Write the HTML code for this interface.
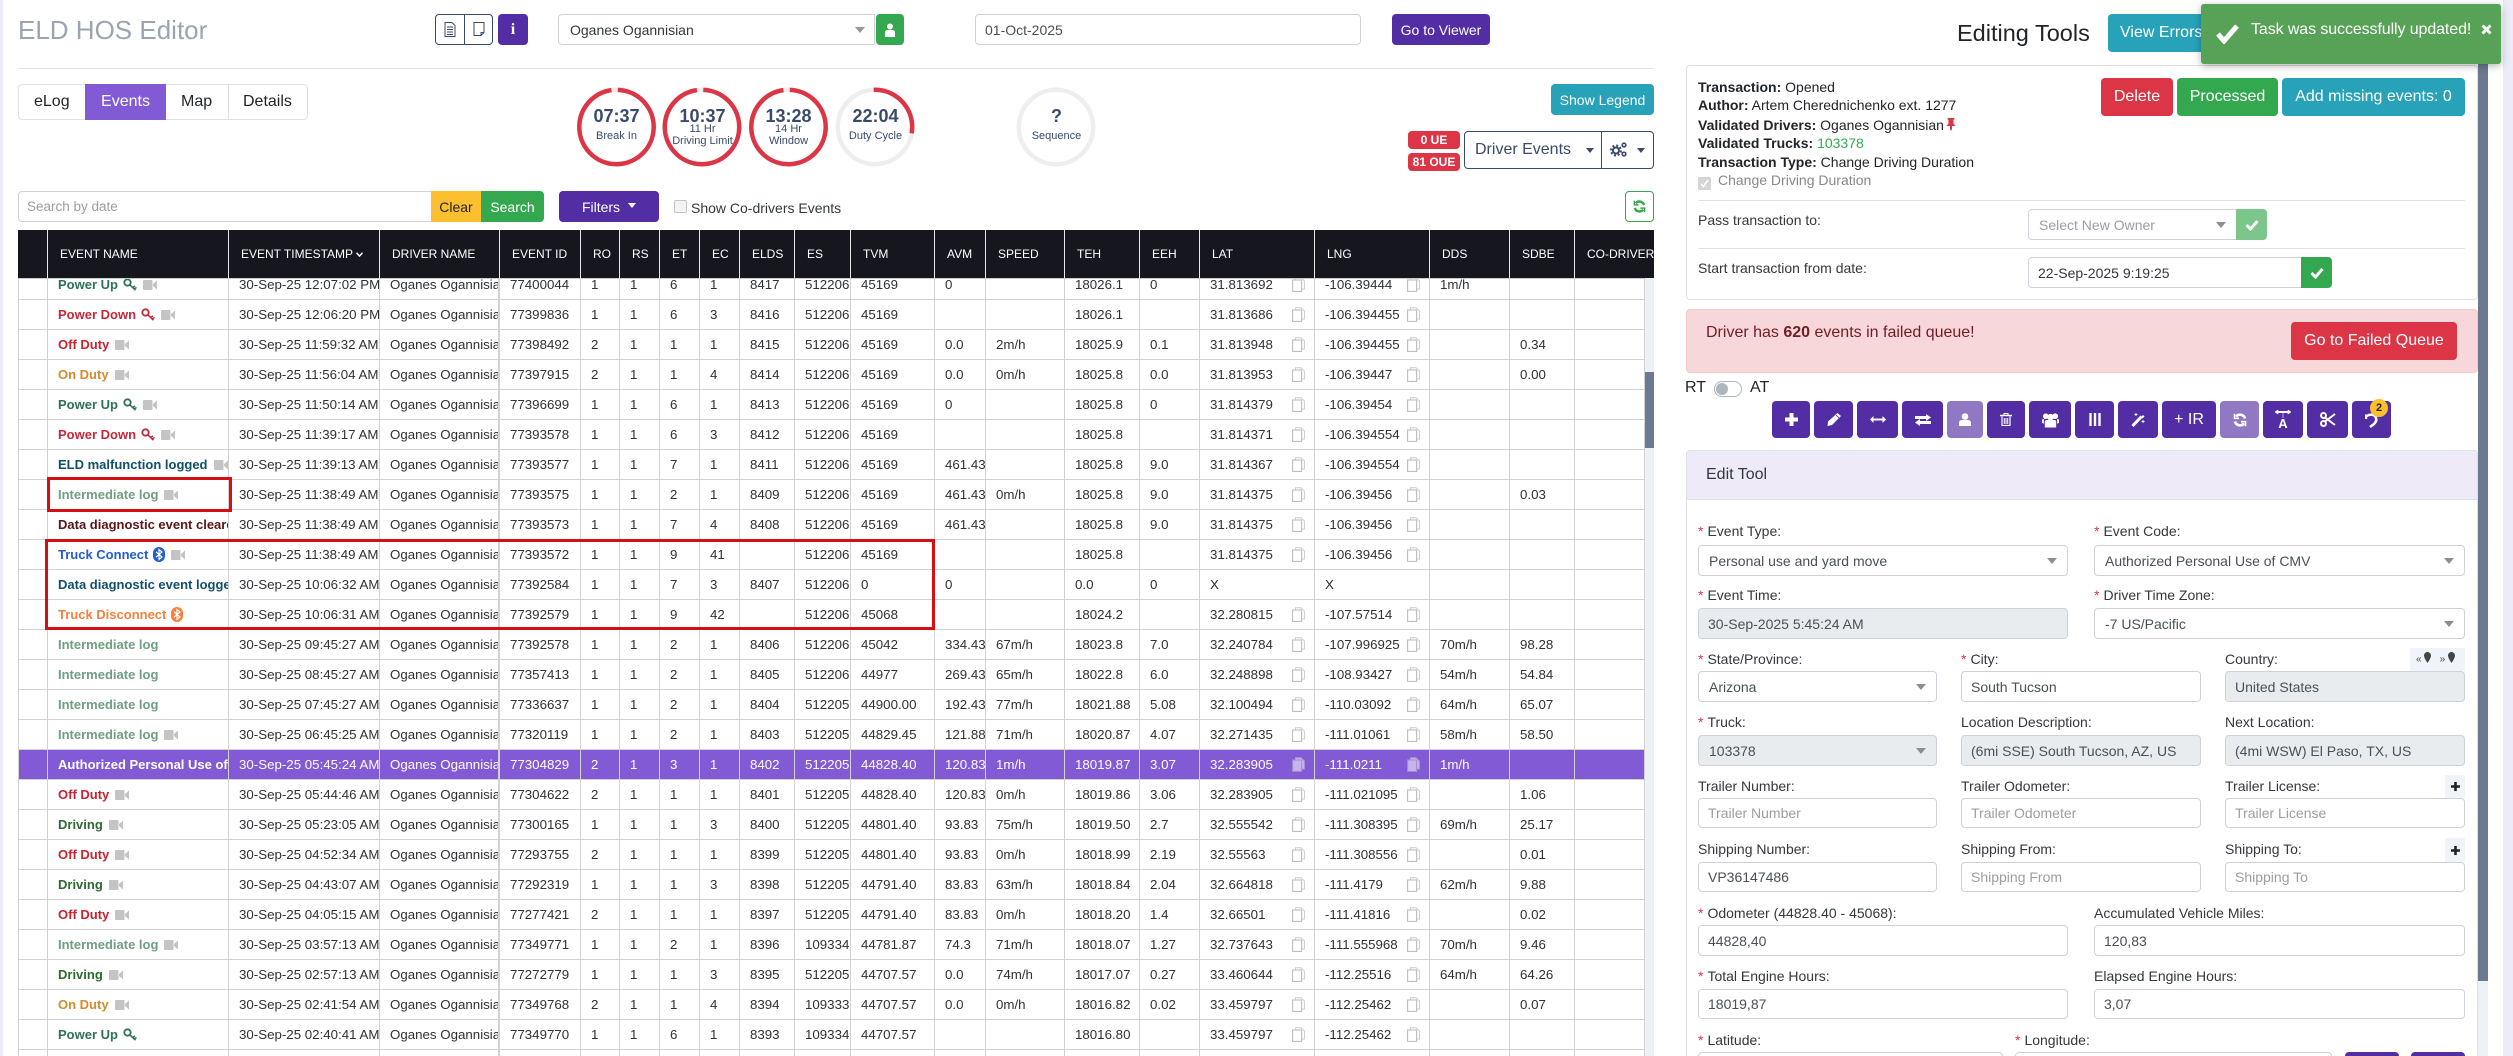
<!DOCTYPE html>
<html><head><meta charset="utf-8"><title>ELD HOS Editor</title>
<style>
*{box-sizing:border-box}
html,body{margin:0;padding:0;width:2513px;height:1056px;overflow:hidden;background:#fff;font-family:"Liberation Sans",sans-serif;color:#212529;font-size:14px}
#root{position:relative;width:2513px;height:1056px;overflow:hidden;background:#fff}
.a{position:absolute;white-space:nowrap}
.b{position:absolute;display:flex;align-items:center;justify-content:center;color:#fff;border-radius:4px;white-space:nowrap}
.p{background:#532da3}.g{background:#34a84f}.r{background:#dc3545}.i{background:#28a2b8}
.f{position:absolute;border:1px solid #ced2d8;border-radius:4px;background:#fff;display:flex;align-items:center;padding-left:9px;font-size:14px;color:#495057;white-space:nowrap}
.d{background:#e9ecef}
.s{padding-left:10px}
.s:after{content:"";position:absolute;right:10px;top:12px;border-left:5px solid transparent;border-right:5px solid transparent;border-top:6px solid #8a8f94}
.ph{color:#9a9ea3}
.l{position:absolute;font-size:14px;line-height:16px;color:#33383d;white-space:nowrap}
.l i{color:#dc3545;font-style:normal;margin-right:4px}
table{border-collapse:separate;border-spacing:0;table-layout:fixed;position:absolute}
#tb td{height:30px;padding:0 0 0 10px;border-right:1px solid #d2d2d2;border-bottom:1px solid #d2d2d2;font-size:13.3px;color:#2e3135;white-space:nowrap;overflow:hidden;position:relative;vertical-align:middle}
#tb td:first-child{border-left:1px solid #d2d2d2}
#tb td:nth-child(2){font-weight:bold;font-size:13px}
#tb td:nth-child(4){border-right:2px solid #d2d2d2}
#tb tr.sel td{background:#835ad6;color:#fff}
#th td{height:48px;background:#16161e;color:#fff;font-size:12px;padding:0 0 0 12px;border-right:1px solid #e8e8e8;white-space:nowrap;overflow:hidden;vertical-align:middle}
.c{display:inline-block;width:14px;height:10px;margin-left:6px;vertical-align:-1px}
.k{display:inline-block;width:14px;height:13px;margin-left:5px;vertical-align:-2px}
.bt{display:inline-block;width:12px;height:15px;margin-left:5px;vertical-align:-3px}
.cp{position:absolute;left:92px;top:7px;width:13px;height:15px}
#tb td.pu{color:#2f7058}#tb td.pd{color:#c4283a}#tb td.od{color:#c8232f}#tb td.on{color:#d68a2e}#tb td.em{color:#10506b}#tb td.il{color:#6f9f80}#tb td.dc{color:#5a1518}#tb td.tc{color:#1f5fcf}#tb td.td{color:#f5823c}#tb td.dr{color:#2d6b2f}#tb td.au{color:#fff}
.tbi{position:absolute;top:401px;height:37px;background:#532da3;border-radius:4px;display:flex;align-items:center;justify-content:center;color:#fff}
</style></head><body>
<div id="root">
<svg width="0" height="0" style="position:absolute"><defs>
<symbol id="cam" viewBox="0 0 14 10"><rect x="0" y="0" width="9.500" height="10" rx="1" fill="#c4c4c4"/><path d="M10 4 14 .5v9L10 6z" fill="#c4c4c4"/></symbol>
<symbol id="key" viewBox="0 0 14 13"><circle cx="4.500" cy="4.500" r="3.200" fill="none" stroke="currentColor" stroke-width="1.800"/><path d="M6.800 6.800 12.500 12.200M9.500 9.500 12 8M11 11 13.500 9.500" fill="none" stroke="currentColor" stroke-width="1.600"/></symbol>
<symbol id="bt" viewBox="0 0 12 15"><rect width="12" height="15" rx="6" fill="currentColor"/><path d="M3 4.800 9 10 6 12.500V2.500L9 5 3 10.200" fill="none" stroke="#fff" stroke-width="1.200"/></symbol>
<symbol id="cp" viewBox="0 0 13 15"><path d="M3.500 3V.7h5.500L12.400 4v8H9.500" fill="#fff" stroke="#ccc" stroke-width="1"/><rect x=".6" y="3" width="9" height="11.400" fill="#fff" stroke="#bdbdbd" stroke-width="1.100"/></symbol>
</defs></svg>

<div class="a" style="left:0;top:0;width:3px;height:1056px;background:#ecebf7"></div>
<div class="a" style="left:2503px;top:0;width:10px;height:1056px;background:#ecebf7"></div>

<div class="a" style="left:18px;top:14px;font-size:26px;line-height:32px;color:#9aa5b1">ELD HOS Editor</div>
<div class="a" style="left:435px;top:14px;width:58px;height:31px;border:1px solid #3a4a6b;border-radius:4px"></div>
<div class="a" style="left:464px;top:14px;width:1px;height:31px;background:#3a4a6b"></div>
<svg class="a" style="left:444px;top:22px" width="12" height="15" viewBox="0 0 12 15"><path d="M1 .5h7l3 3v11H1zM3 5h6M3 7.500h6M3 10h6M3 12.500h6" fill="none" stroke="#3a4a6b"/></svg>
<svg class="a" style="left:473px;top:22px" width="12" height="15" viewBox="0 0 12 15"><path d="M1 .5h10v10l-3 3H1zM8 13.500v-3h3" fill="none" stroke="#3a4a6b"/></svg>
<div class="b p" style="left:498px;top:14px;width:30px;height:31px;font-weight:bold;font-family:'Liberation Serif',serif;font-size:16px">i</div>
<div class="f" style="left:558px;top:14px;width:317px;height:31px;padding-left:11px;color:#33383d;border-radius:4px 0 0 4px">Oganes Ogannisian</div>
<div class="a" style="left:855px;top:27px;border-left:5px solid transparent;border-right:5px solid transparent;border-top:6px solid #999"></div>
<div class="b g" style="left:876px;top:14px;width:28px;height:31px"><svg width="12" height="14" viewBox="0 0 12 14"><circle cx="6" cy="3.500" r="3" fill="#fff"/><path d="M1 14V9.500Q1 7 4 7h4q3 0 3 2.500V14z" fill="#fff"/></svg></div>
<div class="f" style="left:975px;top:14px;width:386px;height:31px;color:#495057">01-Oct-2025</div>
<div class="b p" style="left:1392px;top:14px;width:98px;height:31px;font-size:14px">Go to Viewer</div>
<div class="a" style="left:18px;top:68px;width:1636px;height:1px;background:#dee2e6"></div>

<div class="a" style="left:18px;top:84px;width:290px;height:36px;border:1px solid #dee2e6;border-radius:4px"></div>
<div class="a" style="left:228px;top:84px;width:1px;height:36px;background:#dee2e6"></div>
<div class="a" style="left:34px;top:84px;line-height:36px;font-size:16px">eLog</div>
<div class="b" style="left:85px;top:84px;width:81px;height:36px;background:#835ad6;border-radius:0;font-size:16px">Events</div>
<div class="a" style="left:181px;top:84px;line-height:36px;font-size:16px">Map</div>
<div class="a" style="left:243px;top:84px;line-height:36px;font-size:16px">Details</div>

<svg class="a" style="left:570px;top:84px" width="530" height="86" viewBox="0 0 530 86" fill="none">
<g stroke-width="4.500">
<circle cx="46.500" cy="43" r="37.200" stroke="#eee"/><circle cx="46.500" cy="43" r="37.200" stroke="#dc3545" stroke-dasharray="227 233.700" transform="rotate(-88 46.500 43)"/>
<circle cx="132" cy="43" r="37.200" stroke="#eee"/><circle cx="132" cy="43" r="37.200" stroke="#dc3545" stroke-dasharray="227 233.700" transform="rotate(-88 132 43)"/>
<circle cx="218.500" cy="43" r="37.200" stroke="#eee"/><circle cx="218.500" cy="43" r="37.200" stroke="#dc3545" stroke-dasharray="227 233.700" transform="rotate(-88 218.500 43)"/>
<circle cx="305" cy="43" r="37.200" stroke="#eee"/><circle cx="305" cy="43" r="37.200" stroke="#dc3545" stroke-dasharray="66 233.700" transform="rotate(-92 305 43)"/>
<circle cx="486" cy="43" r="37.200" stroke="#eee"/>
</g></svg>
<div class="a" style="left:576px;top:105px;width:81px;text-align:center;font:bold 18px/22px 'Liberation Sans',sans-serif;color:#3a4a6b">07:37</div>
<div class="a" style="left:576px;top:129px;width:81px;text-align:center;font-size:11px;line-height:14px;color:#3a4a6b">Break In</div>
<div class="a" style="left:662px;top:105px;width:81px;text-align:center;font:bold 18px/22px 'Liberation Sans',sans-serif;color:#3a4a6b">10:37</div>
<div class="a" style="left:662px;top:124px;width:81px;text-align:center;font-size:11px;line-height:11.500px;color:#3a4a6b">11 Hr<br>Driving Limit</div>
<div class="a" style="left:748px;top:105px;width:81px;text-align:center;font:bold 18px/22px 'Liberation Sans',sans-serif;color:#3a4a6b">13:28</div>
<div class="a" style="left:748px;top:124px;width:81px;text-align:center;font-size:11px;line-height:11.500px;color:#3a4a6b">14 Hr<br>Window</div>
<div class="a" style="left:835px;top:105px;width:81px;text-align:center;font:bold 18px/22px 'Liberation Sans',sans-serif;color:#3a4a6b">22:04</div>
<div class="a" style="left:835px;top:129px;width:81px;text-align:center;font-size:11px;line-height:14px;color:#3a4a6b">Duty Cycle</div>
<div class="a" style="left:1016px;top:105px;width:81px;text-align:center;font:bold 18px/22px 'Liberation Sans',sans-serif;color:#3a4a6b">?</div>
<div class="a" style="left:1016px;top:129px;width:81px;text-align:center;font-size:11px;line-height:14px;color:#3a4a6b">Sequence</div>

<div class="b i" style="left:1551px;top:84px;width:103px;height:31px;font-size:14px">Show Legend</div>
<div class="b r" style="left:1408px;top:131px;width:52px;height:18px;font-size:12px;font-weight:bold">0 UE</div>
<div class="b r" style="left:1408px;top:153px;width:52px;height:18px;font-size:12px;font-weight:bold">81 OUE</div>
<div class="a" style="left:1464px;top:131px;width:190px;height:38px;border:1px solid #3a4a6b;border-radius:4px"></div>
<div class="a" style="left:1601px;top:131px;width:1px;height:38px;background:#3a4a6b"></div>
<div class="a" style="left:1475px;top:131px;line-height:38px;font-size:16px;color:#3a4a6b">Driver Events</div>
<div class="a" style="left:1586px;top:148px;border-left:4px solid transparent;border-right:4px solid transparent;border-top:5px solid #3a4a6b"></div>
<svg class="a" style="left:1610px;top:142px" width="18" height="15" viewBox="0 0 18 15" fill="none" stroke="#3a4a6b"><circle cx="6" cy="8.500" r="3" stroke-width="2"/><circle cx="6" cy="8.500" r="5" stroke-width="2" stroke-dasharray="2 1.930"/><circle cx="14" cy="3" r="1.800" stroke-width="1.600"/><circle cx="14" cy="12" r="1.800" stroke-width="1.600"/></svg>
<div class="a" style="left:1637px;top:148px;border-left:4px solid transparent;border-right:4px solid transparent;border-top:5px solid #3a4a6b"></div>

<div class="f ph" style="left:18px;top:191px;width:414px;height:31px;padding-left:8px;border-radius:4px 0 0 4px;font-size:13.500px">Search by date</div>
<div class="b" style="left:431px;top:191px;width:50px;height:31px;background:#fcc02e;color:#222;border-radius:0;font-size:14px">Clear</div>
<div class="b g" style="left:481px;top:191px;width:63px;height:31px;border-radius:0 4px 4px 0;font-size:14px">Search</div>
<div class="b p" style="left:559px;top:191px;width:100px;height:31px;font-size:14px">Filters<span style="display:inline-block;margin-left:8px;margin-top:-3px;border-left:4px solid transparent;border-right:4px solid transparent;border-top:5px solid #fff"></span></div>
<div class="a" style="left:674px;top:200px;width:13px;height:13px;border:1px solid #c4c4c4;border-radius:2px;background:#f3f3f3"></div>
<div class="a" style="left:691px;top:199px;font-size:14px;line-height:18px;color:#33383d">Show Co-drivers Events</div>
<div class="a" style="left:1625px;top:191px;width:29px;height:31px;border:1px solid #34a84f;border-radius:4px"></div>
<svg class="a" style="left:1633px;top:200px" width="13" height="13" viewBox="0 0 14 14" fill="none" stroke="#34a84f" stroke-width="2.600"><path d="M12 5.500A5.200 5.200 0 0 0 3 3.500M2 8.500A5.200 5.200 0 0 0 11 10.500"/><path d="M1.500.8v4.500h4.500M12.500 13.200V8.700H8" stroke-width="1.600"/></svg>

<table id="th" style="left:18px;top:230px;width:1636px">
<colgroup><col width="30"><col width="181"><col width="151"><col width="120"><col width="81"><col width="39"><col width="40"><col width="40"><col width="40"><col width="55"><col width="56"><col width="84"><col width="51"><col width="79"><col width="75"><col width="60"><col width="115"><col width="115"><col width="80"><col width="65"><col width="79"></colgroup>
<tr><td></td><td>EVENT NAME</td><td>EVENT TIMESTAMP <svg width="7" height="5" viewBox="0 0 7 5" style="vertical-align:1px"><path d="M.5.800 3.500 4 6.500.8" fill="none" stroke="#fff" stroke-width="1.500"/></svg></td><td>DRIVER NAME</td><td>EVENT ID</td><td>RO</td><td>RS</td><td>ET</td><td>EC</td><td>ELDS</td><td>ES</td><td>TVM</td><td>AVM</td><td>SPEED</td><td>TEH</td><td>EEH</td><td>LAT</td><td>LNG</td><td>DDS</td><td>SDBE</td><td style="border-right:0">CO-DRIVER</td></tr>
</table>
<div class="a" style="left:18px;top:278px;width:1627px;height:1px;background:#ccc;z-index:2"></div>

<div class="a" style="left:18px;top:278px;width:1627px;height:778px;overflow:hidden">
<table id="tb" style="left:0;top:-8px;width:1627px">
<colgroup><col width="30"><col width="181"><col width="151"><col width="120"><col width="81"><col width="39"><col width="40"><col width="40"><col width="40"><col width="55"><col width="56"><col width="84"><col width="51"><col width="79"><col width="75"><col width="60"><col width="115"><col width="115"><col width="80"><col width="65"><col width="70"></colgroup>
<tr><td></td><td class="pu">Power Up<svg class="k"><use href="#key"/></svg><svg class="c"><use href="#cam"/></svg></td><td>30-Sep-25 12:07:02 PM</td><td>Oganes Ogannisian</td><td>77400044</td><td>1</td><td>1</td><td>6</td><td>1</td><td>8417</td><td>512206</td><td>45169</td><td>0</td><td></td><td>18026.1</td><td>0</td><td>31.813692<svg class="cp"><use href="#cp"/></svg></td><td>-106.39444<svg class="cp"><use href="#cp"/></svg></td><td>1m/h</td><td></td><td></td></tr>
<tr><td></td><td class="pd">Power Down<svg class="k"><use href="#key"/></svg><svg class="c"><use href="#cam"/></svg></td><td>30-Sep-25 12:06:20 PM</td><td>Oganes Ogannisian</td><td>77399836</td><td>1</td><td>1</td><td>6</td><td>3</td><td>8416</td><td>512206</td><td>45169</td><td></td><td></td><td>18026.1</td><td></td><td>31.813686<svg class="cp"><use href="#cp"/></svg></td><td>-106.394455<svg class="cp"><use href="#cp"/></svg></td><td></td><td></td><td></td></tr>
<tr><td></td><td class="od">Off Duty<svg class="c"><use href="#cam"/></svg></td><td>30-Sep-25 11:59:32 AM</td><td>Oganes Ogannisian</td><td>77398492</td><td>2</td><td>1</td><td>1</td><td>1</td><td>8415</td><td>512206</td><td>45169</td><td>0.0</td><td>2m/h</td><td>18025.9</td><td>0.1</td><td>31.813948<svg class="cp"><use href="#cp"/></svg></td><td>-106.394455<svg class="cp"><use href="#cp"/></svg></td><td></td><td>0.34</td><td></td></tr>
<tr><td></td><td class="on">On Duty<svg class="c"><use href="#cam"/></svg></td><td>30-Sep-25 11:56:04 AM</td><td>Oganes Ogannisian</td><td>77397915</td><td>2</td><td>1</td><td>1</td><td>4</td><td>8414</td><td>512206</td><td>45169</td><td>0.0</td><td>0m/h</td><td>18025.8</td><td>0.0</td><td>31.813953<svg class="cp"><use href="#cp"/></svg></td><td>-106.39447<svg class="cp"><use href="#cp"/></svg></td><td></td><td>0.00</td><td></td></tr>
<tr><td></td><td class="pu">Power Up<svg class="k"><use href="#key"/></svg><svg class="c"><use href="#cam"/></svg></td><td>30-Sep-25 11:50:14 AM</td><td>Oganes Ogannisian</td><td>77396699</td><td>1</td><td>1</td><td>6</td><td>1</td><td>8413</td><td>512206</td><td>45169</td><td>0</td><td></td><td>18025.8</td><td>0</td><td>31.814379<svg class="cp"><use href="#cp"/></svg></td><td>-106.39454<svg class="cp"><use href="#cp"/></svg></td><td></td><td></td><td></td></tr>
<tr><td></td><td class="pd">Power Down<svg class="k"><use href="#key"/></svg><svg class="c"><use href="#cam"/></svg></td><td>30-Sep-25 11:39:17 AM</td><td>Oganes Ogannisian</td><td>77393578</td><td>1</td><td>1</td><td>6</td><td>3</td><td>8412</td><td>512206</td><td>45169</td><td></td><td></td><td>18025.8</td><td></td><td>31.814371<svg class="cp"><use href="#cp"/></svg></td><td>-106.394554<svg class="cp"><use href="#cp"/></svg></td><td></td><td></td><td></td></tr>
<tr><td></td><td class="em">ELD malfunction logged<svg class="c"><use href="#cam"/></svg></td><td>30-Sep-25 11:39:13 AM</td><td>Oganes Ogannisian</td><td>77393577</td><td>1</td><td>1</td><td>7</td><td>1</td><td>8411</td><td>512206</td><td>45169</td><td>461.43</td><td></td><td>18025.8</td><td>9.0</td><td>31.814367<svg class="cp"><use href="#cp"/></svg></td><td>-106.394554<svg class="cp"><use href="#cp"/></svg></td><td></td><td></td><td></td></tr>
<tr><td></td><td class="il">Intermediate log<svg class="c"><use href="#cam"/></svg></td><td>30-Sep-25 11:38:49 AM</td><td>Oganes Ogannisian</td><td>77393575</td><td>1</td><td>1</td><td>2</td><td>1</td><td>8409</td><td>512206</td><td>45169</td><td>461.43</td><td>0m/h</td><td>18025.8</td><td>9.0</td><td>31.814375<svg class="cp"><use href="#cp"/></svg></td><td>-106.39456<svg class="cp"><use href="#cp"/></svg></td><td></td><td>0.03</td><td></td></tr>
<tr><td></td><td class="dc">Data diagnostic event cleared</td><td>30-Sep-25 11:38:49 AM</td><td>Oganes Ogannisian</td><td>77393573</td><td>1</td><td>1</td><td>7</td><td>4</td><td>8408</td><td>512206</td><td>45169</td><td>461.43</td><td></td><td>18025.8</td><td>9.0</td><td>31.814375<svg class="cp"><use href="#cp"/></svg></td><td>-106.39456<svg class="cp"><use href="#cp"/></svg></td><td></td><td></td><td></td></tr>
<tr><td></td><td class="tc">Truck Connect<svg class="bt"><use href="#bt"/></svg><svg class="c"><use href="#cam"/></svg></td><td>30-Sep-25 11:38:49 AM</td><td>Oganes Ogannisian</td><td>77393572</td><td>1</td><td>1</td><td>9</td><td>41</td><td></td><td>512206</td><td>45169</td><td></td><td></td><td>18025.8</td><td></td><td>31.814375<svg class="cp"><use href="#cp"/></svg></td><td>-106.39456<svg class="cp"><use href="#cp"/></svg></td><td></td><td></td><td></td></tr>
<tr><td></td><td class="em">Data diagnostic event logged</td><td>30-Sep-25 10:06:32 AM</td><td>Oganes Ogannisian</td><td>77392584</td><td>1</td><td>1</td><td>7</td><td>3</td><td>8407</td><td>512206</td><td>0</td><td>0</td><td></td><td>0.0</td><td>0</td><td>X</td><td>X</td><td></td><td></td><td></td></tr>
<tr><td></td><td class="td">Truck Disconnect<svg class="bt"><use href="#bt"/></svg></td><td>30-Sep-25 10:06:31 AM</td><td>Oganes Ogannisian</td><td>77392579</td><td>1</td><td>1</td><td>9</td><td>42</td><td></td><td>512206</td><td>45068</td><td></td><td></td><td>18024.2</td><td></td><td>32.280815<svg class="cp"><use href="#cp"/></svg></td><td>-107.57514<svg class="cp"><use href="#cp"/></svg></td><td></td><td></td><td></td></tr>
<tr><td></td><td class="il">Intermediate log</td><td>30-Sep-25 09:45:27 AM</td><td>Oganes Ogannisian</td><td>77392578</td><td>1</td><td>1</td><td>2</td><td>1</td><td>8406</td><td>512206</td><td>45042</td><td>334.43</td><td>67m/h</td><td>18023.8</td><td>7.0</td><td>32.240784<svg class="cp"><use href="#cp"/></svg></td><td>-107.996925<svg class="cp"><use href="#cp"/></svg></td><td>70m/h</td><td>98.28</td><td></td></tr>
<tr><td></td><td class="il">Intermediate log</td><td>30-Sep-25 08:45:27 AM</td><td>Oganes Ogannisian</td><td>77357413</td><td>1</td><td>1</td><td>2</td><td>1</td><td>8405</td><td>512206</td><td>44977</td><td>269.43</td><td>65m/h</td><td>18022.8</td><td>6.0</td><td>32.248898<svg class="cp"><use href="#cp"/></svg></td><td>-108.93427<svg class="cp"><use href="#cp"/></svg></td><td>54m/h</td><td>54.84</td><td></td></tr>
<tr><td></td><td class="il">Intermediate log</td><td>30-Sep-25 07:45:27 AM</td><td>Oganes Ogannisian</td><td>77336637</td><td>1</td><td>1</td><td>2</td><td>1</td><td>8404</td><td>512205</td><td>44900.00</td><td>192.43</td><td>77m/h</td><td>18021.88</td><td>5.08</td><td>32.100494<svg class="cp"><use href="#cp"/></svg></td><td>-110.03092<svg class="cp"><use href="#cp"/></svg></td><td>64m/h</td><td>65.07</td><td></td></tr>
<tr><td></td><td class="il">Intermediate log<svg class="c"><use href="#cam"/></svg></td><td>30-Sep-25 06:45:25 AM</td><td>Oganes Ogannisian</td><td>77320119</td><td>1</td><td>1</td><td>2</td><td>1</td><td>8403</td><td>512205</td><td>44829.45</td><td>121.88</td><td>71m/h</td><td>18020.87</td><td>4.07</td><td>32.271435<svg class="cp"><use href="#cp"/></svg></td><td>-111.01061<svg class="cp"><use href="#cp"/></svg></td><td>58m/h</td><td>58.50</td><td></td></tr>
<tr class="sel"><td></td><td class="au">Authorized Personal Use of CMV</td><td>30-Sep-25 05:45:24 AM</td><td>Oganes Ogannisian</td><td>77304829</td><td>2</td><td>1</td><td>3</td><td>1</td><td>8402</td><td>512205</td><td>44828.40</td><td>120.83</td><td>1m/h</td><td>18019.87</td><td>3.07</td><td>32.283905<svg class="cp" style="opacity:.55"><use href="#cp"/></svg></td><td>-111.0211<svg class="cp" style="opacity:.55"><use href="#cp"/></svg></td><td>1m/h</td><td></td><td></td></tr>
<tr><td></td><td class="od">Off Duty<svg class="c"><use href="#cam"/></svg></td><td>30-Sep-25 05:44:46 AM</td><td>Oganes Ogannisian</td><td>77304622</td><td>2</td><td>1</td><td>1</td><td>1</td><td>8401</td><td>512205</td><td>44828.40</td><td>120.83</td><td>0m/h</td><td>18019.86</td><td>3.06</td><td>32.283905<svg class="cp"><use href="#cp"/></svg></td><td>-111.021095<svg class="cp"><use href="#cp"/></svg></td><td></td><td>1.06</td><td></td></tr>
<tr><td></td><td class="dr">Driving<svg class="c"><use href="#cam"/></svg></td><td>30-Sep-25 05:23:05 AM</td><td>Oganes Ogannisian</td><td>77300165</td><td>1</td><td>1</td><td>1</td><td>3</td><td>8400</td><td>512205</td><td>44801.40</td><td>93.83</td><td>75m/h</td><td>18019.50</td><td>2.7</td><td>32.555542<svg class="cp"><use href="#cp"/></svg></td><td>-111.308395<svg class="cp"><use href="#cp"/></svg></td><td>69m/h</td><td>25.17</td><td></td></tr>
<tr><td></td><td class="od">Off Duty<svg class="c"><use href="#cam"/></svg></td><td>30-Sep-25 04:52:34 AM</td><td>Oganes Ogannisian</td><td>77293755</td><td>2</td><td>1</td><td>1</td><td>1</td><td>8399</td><td>512205</td><td>44801.40</td><td>93.83</td><td>0m/h</td><td>18018.99</td><td>2.19</td><td>32.55563<svg class="cp"><use href="#cp"/></svg></td><td>-111.308556<svg class="cp"><use href="#cp"/></svg></td><td></td><td>0.01</td><td></td></tr>
<tr><td></td><td class="dr">Driving<svg class="c"><use href="#cam"/></svg></td><td>30-Sep-25 04:43:07 AM</td><td>Oganes Ogannisian</td><td>77292319</td><td>1</td><td>1</td><td>1</td><td>3</td><td>8398</td><td>512205</td><td>44791.40</td><td>83.83</td><td>63m/h</td><td>18018.84</td><td>2.04</td><td>32.664818<svg class="cp"><use href="#cp"/></svg></td><td>-111.4179<svg class="cp"><use href="#cp"/></svg></td><td>62m/h</td><td>9.88</td><td></td></tr>
<tr><td></td><td class="od">Off Duty<svg class="c"><use href="#cam"/></svg></td><td>30-Sep-25 04:05:15 AM</td><td>Oganes Ogannisian</td><td>77277421</td><td>2</td><td>1</td><td>1</td><td>1</td><td>8397</td><td>512205</td><td>44791.40</td><td>83.83</td><td>0m/h</td><td>18018.20</td><td>1.4</td><td>32.66501<svg class="cp"><use href="#cp"/></svg></td><td>-111.41816<svg class="cp"><use href="#cp"/></svg></td><td></td><td>0.02</td><td></td></tr>
<tr><td></td><td class="il">Intermediate log<svg class="c"><use href="#cam"/></svg></td><td>30-Sep-25 03:57:13 AM</td><td>Oganes Ogannisian</td><td>77349771</td><td>1</td><td>1</td><td>2</td><td>1</td><td>8396</td><td>109334</td><td>44781.87</td><td>74.3</td><td>71m/h</td><td>18018.07</td><td>1.27</td><td>32.737643<svg class="cp"><use href="#cp"/></svg></td><td>-111.555968<svg class="cp"><use href="#cp"/></svg></td><td>70m/h</td><td>9.46</td><td></td></tr>
<tr><td></td><td class="dr">Driving<svg class="c"><use href="#cam"/></svg></td><td>30-Sep-25 02:57:13 AM</td><td>Oganes Ogannisian</td><td>77272779</td><td>1</td><td>1</td><td>1</td><td>3</td><td>8395</td><td>512205</td><td>44707.57</td><td>0.0</td><td>74m/h</td><td>18017.07</td><td>0.27</td><td>33.460644<svg class="cp"><use href="#cp"/></svg></td><td>-112.25516<svg class="cp"><use href="#cp"/></svg></td><td>64m/h</td><td>64.26</td><td></td></tr>
<tr><td></td><td class="on">On Duty<svg class="c"><use href="#cam"/></svg></td><td>30-Sep-25 02:41:54 AM</td><td>Oganes Ogannisian</td><td>77349768</td><td>2</td><td>1</td><td>1</td><td>4</td><td>8394</td><td>109333</td><td>44707.57</td><td>0.0</td><td>0m/h</td><td>18016.82</td><td>0.02</td><td>33.459797<svg class="cp"><use href="#cp"/></svg></td><td>-112.25462<svg class="cp"><use href="#cp"/></svg></td><td></td><td>0.07</td><td></td></tr>
<tr><td></td><td class="pu">Power Up<svg class="k"><use href="#key"/></svg></td><td>30-Sep-25 02:40:41 AM</td><td>Oganes Ogannisian</td><td>77349770</td><td>1</td><td>1</td><td>6</td><td>1</td><td>8393</td><td>109334</td><td>44707.57</td><td></td><td></td><td>18016.80</td><td></td><td>33.459797<svg class="cp"><use href="#cp"/></svg></td><td>-112.25462<svg class="cp"><use href="#cp"/></svg></td><td></td><td></td><td></td></tr>
<tr><td></td><td></td><td></td><td></td><td></td><td></td><td></td><td></td><td></td><td></td><td></td><td></td><td></td><td></td><td></td><td></td><td></td><td></td><td></td><td></td><td></td></tr>
</table>
</div>

<div class="a" style="left:1645px;top:278px;width:9px;height:778px;background:#edf0f4"></div>
<div class="a" style="left:1645px;top:372px;width:9px;height:76px;background:#6c7a91"></div>
<div class="a" style="left:47px;top:477px;width:185px;height:35px;border:3px solid #d40f14;z-index:3"></div>
<div class="a" style="left:45px;top:539px;width:890px;height:91px;border:3px solid #d40f14;z-index:3"></div>

<!-- right -->
<div class="a" style="left:1957px;top:18px;font-size:23.500px;line-height:30px;color:#212529">Editing Tools</div>
<div class="b i" style="left:2108px;top:14px;width:110px;height:38px;font-size:16px;justify-content:flex-start;padding-left:12px">View Errors</div>
<div class="a" style="left:2478px;top:40px;width:10px;height:941px;background:#6c7a91"></div>
<div class="a" style="left:2478px;top:981px;width:10px;height:75px;background:#edf0f4"></div>

<div class="a" style="left:1686px;top:65px;width:792px;height:235px;border:1px solid #dee2e6;border-radius:4px"></div>
<div class="a" style="left:1698px;top:78px;font-size:14px;line-height:18px"><b>Transaction:</b> Opened</div>
<div class="a" style="left:1698px;top:96px;font-size:14px;line-height:18px"><b>Author:</b> Artem Cherednichenko ext. 1277</div>
<div class="a" style="left:1698px;top:116px;font-size:14px;line-height:18px"><b>Validated Drivers:</b> Oganes Ogannisian<svg width="10" height="13" viewBox="0 0 10 13" style="vertical-align:-1px;margin-left:2px"><path d="M1.500 0h7v1L7.500 2v3.500L9.500 8H6v3l-1 2-1-2V8H.5l2-2.500V2l-1-1z" fill="#dc3545"/></svg></div>
<div class="a" style="left:1698px;top:134px;font-size:14px;line-height:18px"><b>Validated Trucks:</b> <span style="color:#34a84f">103378</span></div>
<div class="a" style="left:1698px;top:153px;font-size:14px;line-height:18px"><b>Transaction Type:</b> Change Driving Duration</div>
<div class="a" style="left:1698px;top:177px;width:13px;height:13px;background:#d5d5d5;border-radius:2px"></div>
<svg class="a" style="left:1699px;top:178px" width="11" height="11" viewBox="0 0 11 11"><path d="M2 6 4.500 8.500 9 2" fill="none" stroke="#fff" stroke-width="1.800"/></svg>
<div class="a" style="left:1718px;top:171px;font-size:14px;line-height:18px;color:#85898e">Change Driving Duration</div>
<div class="b r" style="left:2101px;top:78px;width:72px;height:38px;font-size:16px">Delete</div>
<div class="b g" style="left:2177px;top:78px;width:101px;height:38px;font-size:16px">Processed</div>
<div class="b i" style="left:2282px;top:78px;width:183px;height:38px;font-size:16px">Add missing events: 0</div>
<div class="a" style="left:1698px;top:200px;width:767px;height:1px;background:#dee2e6"></div>
<div class="l" style="left:1698px;top:212px">Pass transaction to:</div>
<div class="f ph s" style="left:2028px;top:209px;width:209px;height:31px;border-radius:4px 0 0 4px">Select New Owner</div>
<div class="b" style="left:2236px;top:209px;width:31px;height:31px;background:#7cc68b;border-radius:0 4px 4px 0"><svg width="14" height="12" viewBox="0 0 14 12"><path d="M1.500 6 5.500 10 12.500 2" fill="none" stroke="#fff" stroke-width="3"/></svg></div>
<div class="a" style="left:1698px;top:248px;width:767px;height:1px;background:#dee2e6"></div>
<div class="l" style="left:1698px;top:260px">Start transaction from date:</div>
<div class="f" style="left:2028px;top:257px;width:274px;height:31px;border-radius:4px 0 0 4px;color:#33383d">22-Sep-2025 9:19:25</div>
<div class="b g" style="left:2301px;top:257px;width:31px;height:31px;border-radius:0 4px 4px 0"><svg width="14" height="12" viewBox="0 0 14 12"><path d="M1.500 6 5.500 10 12.500 2" fill="none" stroke="#fff" stroke-width="3"/></svg></div>

<div class="a" style="left:1686px;top:309px;width:792px;height:64px;background:#f8d7da;border:1px solid #f5c6cb;border-radius:4px"></div>
<div class="a" style="left:1706px;top:323px;font-size:16px;line-height:20px;color:#721c24">Driver has <b>620</b> events in failed queue!</div>
<div class="b r" style="left:2291px;top:322px;width:166px;height:38px;font-size:16px">Go to Failed Queue</div>
<div class="a" style="left:1685px;top:378px;font-size:16px;line-height:20px;color:#212529">RT</div>
<div class="a" style="left:1714px;top:381px;width:28px;height:16px;border:1px solid #adb5bd;border-radius:8px;background:#fff"></div>
<div class="a" style="left:1716px;top:383px;width:12px;height:12px;border-radius:6px;background:#adb5bd"></div>
<div class="a" style="left:1750px;top:378px;font-size:16px;line-height:20px;color:#212529">AT</div>

<div class="tbi" style="left:1772px;width:38px"><svg width="13" height="13" viewBox="0 0 13 13"><path d="M6.500 0v13M0 6.500h13" stroke="#fff" stroke-width="4"/></svg></div>
<div class="tbi" style="left:1814px;width:39px"><svg width="14" height="13" viewBox="0 0 14 13"><path d="M10.500 0 14 3 5 12 .5 13l.5-4.500z" fill="#fff"/><path d="M9 2l3 2.800" stroke="#532da3" stroke-width=".8"/></svg></div>
<div class="tbi" style="left:1857px;width:41px"><svg width="16" height="7" viewBox="0 0 16 7"><path d="M0 3.500 3.500 0v2.500h9V0L16 3.500 12.500 7V4.500h-9V7z" fill="#fff"/></svg></div>
<div class="tbi" style="left:1902px;width:41px"><svg width="16" height="12" viewBox="0 0 16 12"><path d="M0 2h11V0l5 3.500L11 7V5H0zM16 7H5V5L0 8.500 5 12v-2h11z" fill="#fff"/></svg></div>
<div class="tbi" style="left:1947px;width:36px;background:#9079c2"><svg width="12" height="13" viewBox="0 0 12 13"><circle cx="6" cy="3.500" r="3.300" fill="#fff"/><path d="M0 13v-3q0-3 3-3h6q3 0 3 3v3z" fill="#fff"/></svg></div>
<div class="tbi" style="left:1987px;width:38px"><svg width="12" height="13" viewBox="0 0 12 13" fill="none" stroke="#fff"><path d="M0 2.500h12" stroke-width="1.500"/><path d="M4 2V.5h4V2" stroke-width="1"/><path d="M2 3.500V12.500h8V3.500" stroke-width="1.200"/><path d="M4.300 5v6M6 5v6M7.700 5v6" stroke-width="1"/></svg></div>
<div class="tbi" style="left:2029px;width:42px"><svg width="17" height="16" viewBox="0 0 18 16" fill="#fff"><circle cx="4" cy="4" r="3"/><circle cx="14" cy="4" r="3"/><circle cx="9" cy="5" r="3.500"/><path d="M3 16V10q0-2 2-2h8q2 0 2 2v6zM0 11V8q0-1 2-1v5zM18 11V8q0-1-2-1v5z"/></svg></div>
<div class="tbi" style="left:2075px;width:39px"><svg width="12" height="13" viewBox="0 0 12 13"><path d="M1.500 0v13M6 0v13M10.500 0v13" stroke="#fff" stroke-width="2.400"/></svg></div>
<div class="tbi" style="left:2118px;width:40px"><svg width="14" height="14" viewBox="0 0 14 14"><path d="M10.500 3.500 1.500 13" stroke="#fff" stroke-width="3"/><path d="M11 3l1.500 1.500" stroke="#fff" stroke-width="3"/><path d="M5 0v3M3.500 1.500h3M12 7v3M10.500 8.500h3" stroke="#fff" stroke-width="1"/></svg></div>
<div class="tbi" style="left:2162px;width:54px;font-size:16px">+ IR</div>
<div class="tbi" style="left:2220px;width:39px;background:#9079c2"><svg width="14" height="14" viewBox="0 0 14 14" fill="none" stroke="#fff" stroke-width="2.600"><path d="M12 5.500A5.200 5.200 0 0 0 3 3.500M2 8.500A5.200 5.200 0 0 0 11 10.500"/><path d="M1.500.8v4.500h4.500M12.500 13.200V8.700H8" stroke-width="1.600"/></svg></div>
<div class="tbi" style="left:2263px;width:40px;flex-direction:column"><svg width="16" height="8" viewBox="0 0 16 8"><path d="M0 2 3 0v1.300h10V0l3 2-3 2V2.700H3V4zM8 2v6" stroke="#fff" stroke-width=".6" fill="#fff"/></svg><span style="font-size:13px;line-height:12px;font-weight:bold">A</span></div>
<div class="tbi" style="left:2307px;width:41px"><svg width="16" height="15" viewBox="0 0 16 15" fill="none" stroke="#fff" stroke-width="2"><circle cx="3.500" cy="3.500" r="2.500"/><circle cx="3.500" cy="11.500" r="2.500"/><path d="M5 5.500 15 13M5 9.500 15 2"/></svg></div>
<div class="tbi" style="left:2352px;width:39px"><svg width="13" height="15" viewBox="0 0 13 15" style="margin-top:2px" fill="none" stroke="#fff" stroke-width="2.500"><path d="M1 6V1.500M1 3.500Q6 0 10 3q3 4-1 8l-4 3"/></svg></div>
<div class="a" style="left:2370px;top:399px;width:18px;height:18px;border-radius:9px;background:#fcc02e;color:#222;font-size:11px;font-weight:bold;line-height:18px;text-align:center">2</div>

<div class="a" style="left:1686px;top:450px;width:792px;height:620px;border:1px solid #dee2e6;border-radius:4px"></div>
<div class="a" style="left:1686px;top:450px;width:792px;height:50px;background:#efeaf8;border:1px solid #dee2e6;border-radius:4px 4px 0 0"></div>
<div class="a" style="left:1706px;top:465px;font-size:16px;line-height:20px;color:#33383d">Edit Tool</div>

<div class="l" style="left:1698px;top:523px"><i>*</i>Event Type:</div>
<div class="l" style="left:2094px;top:523px"><i>*</i>Event Code:</div>
<div class="f s" style="left:1698px;top:545px;width:370px;height:31px">Personal use and yard move</div>
<div class="f s" style="left:2094px;top:545px;width:371px;height:31px">Authorized Personal Use of CMV</div>
<div class="l" style="left:1698px;top:587px"><i>*</i>Event Time:</div>
<div class="l" style="left:2094px;top:587px"><i>*</i>Driver Time Zone:</div>
<div class="f d" style="left:1698px;top:608px;width:370px;height:31px">30-Sep-2025 5:45:24 AM</div>
<div class="f s" style="left:2094px;top:608px;width:371px;height:31px">-7 US/Pacific</div>
<div class="l" style="left:1698px;top:651px"><i>*</i>State/Province:</div>
<div class="l" style="left:1961px;top:651px"><i>*</i>City:</div>
<div class="l" style="left:2225px;top:651px">Country:</div>
<div class="a" style="left:2410px;top:648px;width:55px;height:23px;background:#f0f4fa;color:#444;font-size:10px;line-height:23px;padding-left:6px">« <svg width="7" height="11" viewBox="0 0 7 11" style="vertical-align:-1px"><path d="M3.500 0a3.500 3.500 0 0 1 3.500 3.500Q7 6 3.500 11 0 6 0 3.500A3.500 3.500 0 0 1 3.500 0z" fill="#444"/></svg> &nbsp; » <svg width="7" height="11" viewBox="0 0 7 11" style="vertical-align:-1px"><path d="M3.500 0a3.500 3.500 0 0 1 3.500 3.500Q7 6 3.500 11 0 6 0 3.500A3.500 3.500 0 0 1 3.500 0z" fill="#444"/></svg></div>
<div class="f s" style="left:1698px;top:671px;width:239px;height:31px">Arizona</div>
<div class="f" style="left:1961px;top:671px;width:240px;height:31px">South Tucson</div>
<div class="f d" style="left:2225px;top:671px;width:240px;height:31px">United States</div>
<div class="l" style="left:1698px;top:714px"><i>*</i>Truck:</div>
<div class="l" style="left:1961px;top:714px">Location Description:</div>
<div class="l" style="left:2225px;top:714px">Next Location:</div>
<div class="f d s" style="left:1698px;top:735px;width:239px;height:31px">103378</div>
<div class="f d" style="left:1961px;top:735px;width:240px;height:31px">(6mi SSE) South Tucson, AZ, US</div>
<div class="f d" style="left:2225px;top:735px;width:240px;height:31px">(4mi WSW) El Paso, TX, US</div>
<div class="l" style="left:1698px;top:778px">Trailer Number:</div>
<div class="l" style="left:1961px;top:778px">Trailer Odometer:</div>
<div class="l" style="left:2225px;top:778px">Trailer License:</div>
<div class="b" style="left:2445px;top:775px;width:20px;height:23px;background:#f0f4fa;border-radius:0"><svg width="9" height="9" viewBox="0 0 9 9"><path d="M4.500 0v9M0 4.500h9" stroke="#222" stroke-width="2.600"/></svg></div>
<div class="f ph" style="left:1698px;top:798px;width:239px;height:30px">Trailer Number</div>
<div class="f ph" style="left:1961px;top:798px;width:240px;height:30px">Trailer Odometer</div>
<div class="f ph" style="left:2225px;top:798px;width:240px;height:30px">Trailer License</div>
<div class="l" style="left:1698px;top:841px">Shipping Number:</div>
<div class="l" style="left:1961px;top:841px">Shipping From:</div>
<div class="l" style="left:2225px;top:841px">Shipping To:</div>
<div class="b" style="left:2445px;top:838px;width:20px;height:24px;background:#f0f4fa;border-radius:0"><svg width="9" height="9" viewBox="0 0 9 9"><path d="M4.500 0v9M0 4.500h9" stroke="#222" stroke-width="2.600"/></svg></div>
<div class="f" style="left:1698px;top:862px;width:239px;height:30px">VP36147486</div>
<div class="f ph" style="left:1961px;top:862px;width:240px;height:30px">Shipping From</div>
<div class="f ph" style="left:2225px;top:862px;width:240px;height:30px">Shipping To</div>
<div class="l" style="left:1698px;top:905px"><i>*</i>Odometer (44828.40 - 45068):</div>
<div class="l" style="left:2094px;top:905px">Accumulated Vehicle Miles:</div>
<div class="f" style="left:1698px;top:925px;width:370px;height:31px">44828,40</div>
<div class="f" style="left:2094px;top:925px;width:371px;height:31px">120,83</div>
<div class="l" style="left:1698px;top:968px"><i>*</i>Total Engine Hours:</div>
<div class="l" style="left:2094px;top:968px">Elapsed Engine Hours:</div>
<div class="f" style="left:1698px;top:989px;width:370px;height:30px">18019,87</div>
<div class="f" style="left:2094px;top:989px;width:371px;height:30px">3,07</div>
<div class="l" style="left:1698px;top:1032px"><i>*</i>Latitude:</div>
<div class="l" style="left:2015px;top:1032px"><i>*</i>Longitude:</div>
<div class="f" style="left:1698px;top:1052px;width:305px;height:31px"></div>
<div class="f" style="left:2015px;top:1052px;width:317px;height:31px"></div>
<div class="a p" style="left:2345px;top:1052px;width:54px;height:31px;border-radius:4px"></div>
<div class="a p" style="left:2411px;top:1052px;width:54px;height:31px;border-radius:4px"></div>

<!-- toast -->
<div class="a" style="left:2201px;top:4px;width:300px;height:60px;background:#57a257;border-radius:3px;box-shadow:0 2px 8px rgba(0,0,0,.3);z-index:5"></div>
<svg class="a" style="left:2215px;top:23px;z-index:6" width="26" height="21" viewBox="0 0 26 21"><path d="M3 11 9 18 22 3" fill="none" stroke="#fff" stroke-width="5"/></svg>
<div class="a" style="left:2251px;top:20px;font-size:16px;line-height:20px;color:#fff;z-index:6;letter-spacing:-.1px">Task was successfully updated!</div>
<svg class="a" style="left:2481px;top:24px;z-index:6" width="11" height="11" viewBox="0 0 11 11"><path d="M1.500 1.500 9.500 9.500M9.500 1.500 1.500 9.500" stroke="#fff" stroke-width="3"/></svg>
</div>
</body></html>
